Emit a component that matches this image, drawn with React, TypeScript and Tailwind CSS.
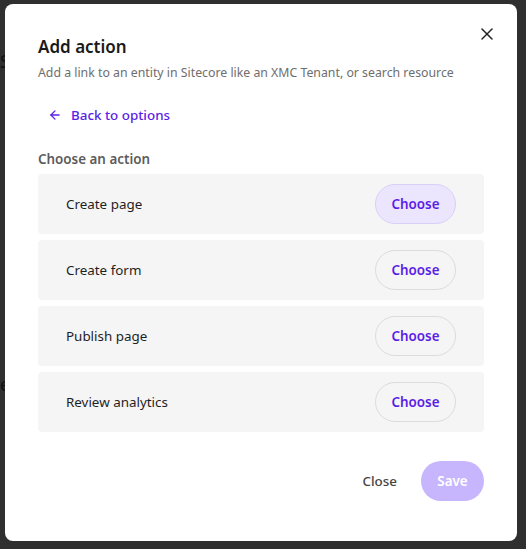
import { ArrowLeft, X } from "lucide-react";

const actions = ["Create page", "Create form", "Publish page", "Review analytics"];

export default function App() {
  return (
    <div
      className="relative h-[549px] w-[526px] overflow-hidden bg-[#2f2f2f]"
      style={{ fontFamily: '"Noto Sans", "Open Sans", sans-serif' }}
    >
      {/* faint page behind the overlay */}
      <div className="absolute left-0 top-[48px] text-[18px] text-[#111]">S</div>
      <div className="absolute left-0 top-[371px] text-[18px] text-[#111]">e</div>

      <div className="absolute left-[5px] top-[4px] flex h-[537px] w-[512px] flex-col rounded-lg bg-white px-[33px] pt-[30px] pb-[40px]">
        <button className="absolute right-[20px] top-[20px] text-[#222]">
          <X size={20} strokeWidth={1.8} />
        </button>

        <h2 className="text-[17px] font-semibold leading-[26px] text-[#1a1a1a]">Add action</h2>
        <p className="mt-[3px] text-[12.3px] leading-[20px] text-[#6e6e6e]">
          Add a link to an entity in Sitecore like an XMC Tenant, or search resource
        </p>

        <button className="mt-[16px] flex h-[32px] items-center gap-[9px] self-start px-[10px] text-[13.4px] font-medium text-[#5a1ee6]">
          <ArrowLeft size={14} strokeWidth={2.2} />
          Back to options
        </button>

        <div className="mt-[18px] text-[13.4px] font-semibold leading-[20px] text-[#5c5c5c]">
          Choose an action
        </div>

        <div className="mt-[5px] flex flex-col gap-[6px]">
          {actions.map((a, i) => (
            <div
              key={a}
              className="flex h-[60px] items-center justify-between rounded-[4px] bg-[#f5f5f5] pl-[28px] pr-[28px]"
            >
              <span className="text-[13.4px] text-[#1f1f1f]">{a}</span>
              <button
                className={
                  i === 0
                    ? "h-[40px] w-[81px] rounded-full border border-[#d9d0f7] bg-[#ebe6fd] text-[13.4px] font-semibold text-[#5a1ee6]"
                    : "h-[40px] w-[81px] rounded-full border border-[#dcdcdc] bg-transparent text-[13.4px] font-semibold text-[#5a1ee6]"
                }
              >
                Choose
              </button>
            </div>
          ))}
        </div>

        <div className="mt-auto flex items-center justify-end gap-[12px]">
          <button className="h-[40px] px-[12px] text-[13.4px] font-medium text-[#444]">Close</button>
          <button className="h-[40px] w-[63px] rounded-full bg-[#c7b6fd] text-[13.4px] font-semibold text-white">
            Save
          </button>
        </div>
      </div>
    </div>
  );
}
